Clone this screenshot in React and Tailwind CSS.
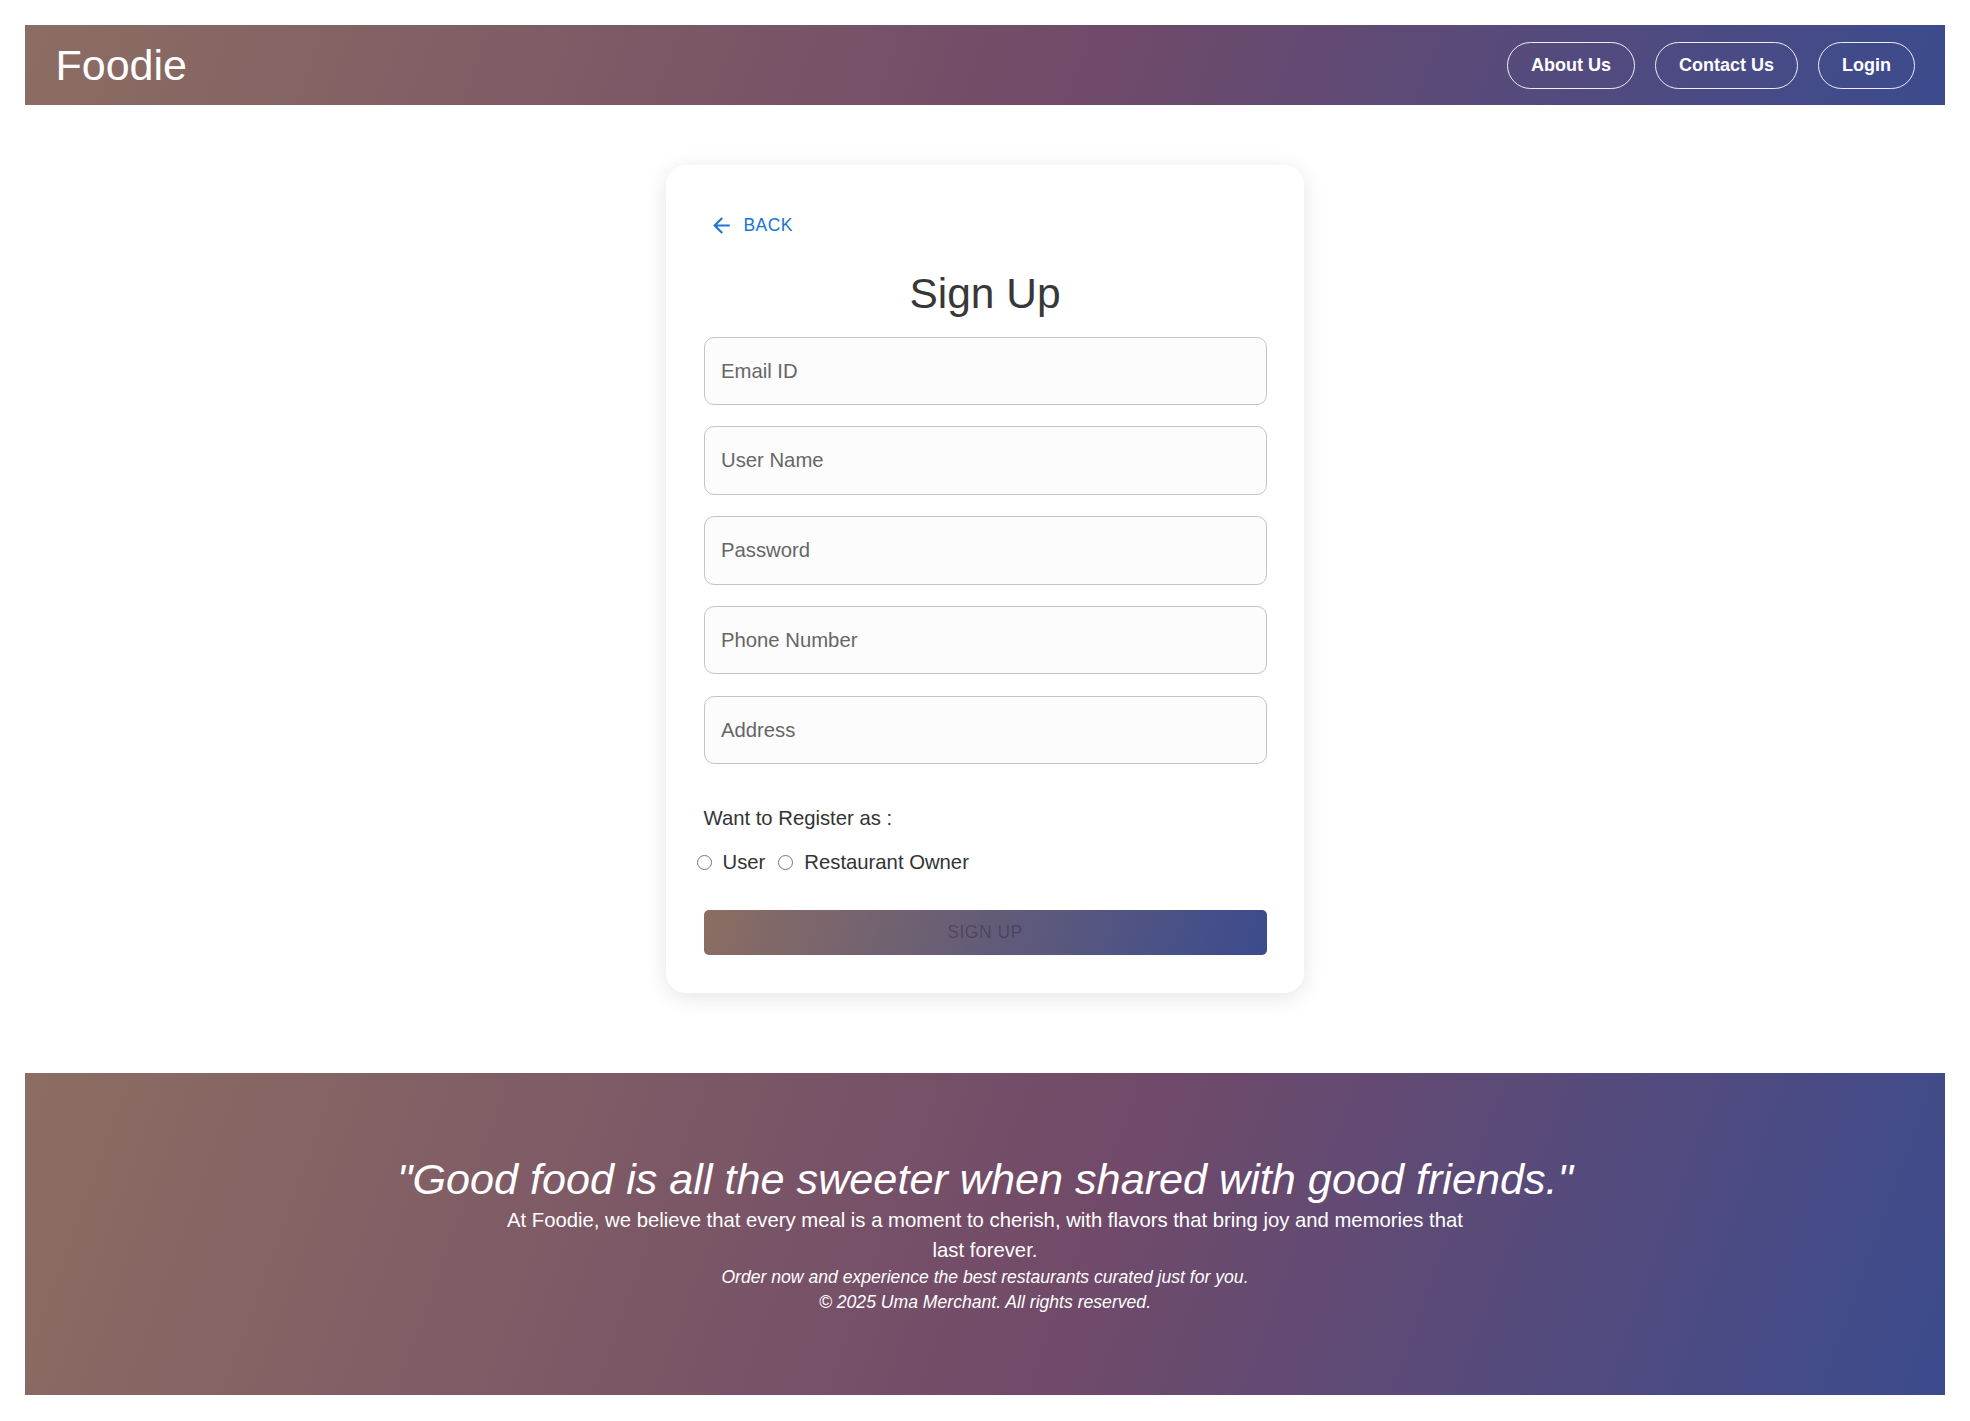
import React from "react";

function ArrowBack() {
  return (
    <svg viewBox="0 0 24 24" className="w-[25px] h-[25px] fill-[#1976d2]">
      <path d="M20 11H7.83l5.59-5.59L12 4l-8 8 8 8 1.41-1.41L7.83 13H20v-2z" />
    </svg>
  );
}

function Field({ label }) {
  return (
    <div className="h-[68.5px] rounded-[10px] border border-[#c4c4c4] bg-[#fcfcfc] flex items-center pl-[16.5px] text-[20.3px] text-[#666]">
      {label}
    </div>
  );
}

function Radio({ label }) {
  return (
    <label className="flex items-center gap-[11px]">
      <input
        type="radio"
        name="role"
        className="appearance-none w-[15px] h-[15px] m-0 rounded-full border border-[#767676] bg-white"
      />
      <span className="text-[20.3px] text-[#333]">{label}</span>
    </label>
  );
}

export default function App() {
  return (
    <div className="p-[25px] bg-white font-['Liberation_Sans',Arial,sans-serif]">
      <header className="h-[80px] flex items-center justify-between pl-[30.5px] pr-[30px] bg-[linear-gradient(110deg,#8c6d62_0%,#714a69_55%,#3b4b8e_100%)]">
        <div className="text-[43px] text-white leading-none">Foodie</div>
        <nav className="flex items-center gap-[20px]">
          {["About Us", "Contact Us", "Login"].map((t) => (
            <button
              key={t}
              className="h-[47px] px-[23px] rounded-full border border-white/90 text-white text-[18px] font-bold"
            >
              {t}
            </button>
          ))}
        </nav>
      </header>

      <main className="pt-[60px] pb-[80px] flex justify-center">
        <div className="w-[638px] bg-white rounded-[20px] shadow-[0_4px_22px_rgba(0,0,0,0.11)] p-[37.5px] pb-[37.5px]">
          <button className="h-[45.5px] flex items-center pl-[5px] pr-[10px] text-[#1976d2] text-[17.5px] tracking-[0.4px]">
            <span className="mr-[10px] flex"><ArrowBack /></span>
            BACK
          </button>
          <h1 className="mt-[19.5px] text-center text-[42.5px] leading-[52.5px] text-[#383838]">Sign Up</h1>
          <div className="mt-[16.5px] flex flex-col gap-[21.25px]">
            <Field label="Email ID" />
            <Field label="User Name" />
            <Field label="Password" />
            <Field label="Phone Number" />
            <Field label="Address" />
          </div>
          <p className="mt-[39px] text-[20.3px] leading-[30px] text-[#333]">Want to Register as :</p>
          <div className="mt-[14px] h-[30px] flex items-center gap-[13px] -ml-[7px]">
            <Radio label="User" />
            <Radio label="Restaurant Owner" />
          </div>
          <button className="mt-[32.5px] w-full h-[45.5px] rounded-[5px] bg-[linear-gradient(110deg,#8c6d62,#3b4b8e)] text-black/25 text-[17.5px] tracking-[0.5px]">
            SIGN UP
          </button>
        </div>
      </main>

      <footer className="py-[80px] bg-[linear-gradient(110deg,#8c6d62_0%,#714a69_55%,#3b4b8e_100%)] text-white text-center">
        <h2 className="text-[43.2px] leading-[52px] italic">
          "Good food is all the sweeter when shared with good friends."
        </h2>
        <p className="text-[20.3px] leading-[30px]">
          At Foodie, we believe that every meal is a moment to cherish, with flavors that bring joy and memories that
          <br />
          last forever.
        </p>
        <p className="text-[17.6px] leading-[25px] italic">
          Order now and experience the best restaurants curated just for you.
        </p>
        <p className="text-[17.6px] leading-[25px] italic">© 2025 Uma Merchant. All rights reserved.</p>
      </footer>
    </div>
  );
}
